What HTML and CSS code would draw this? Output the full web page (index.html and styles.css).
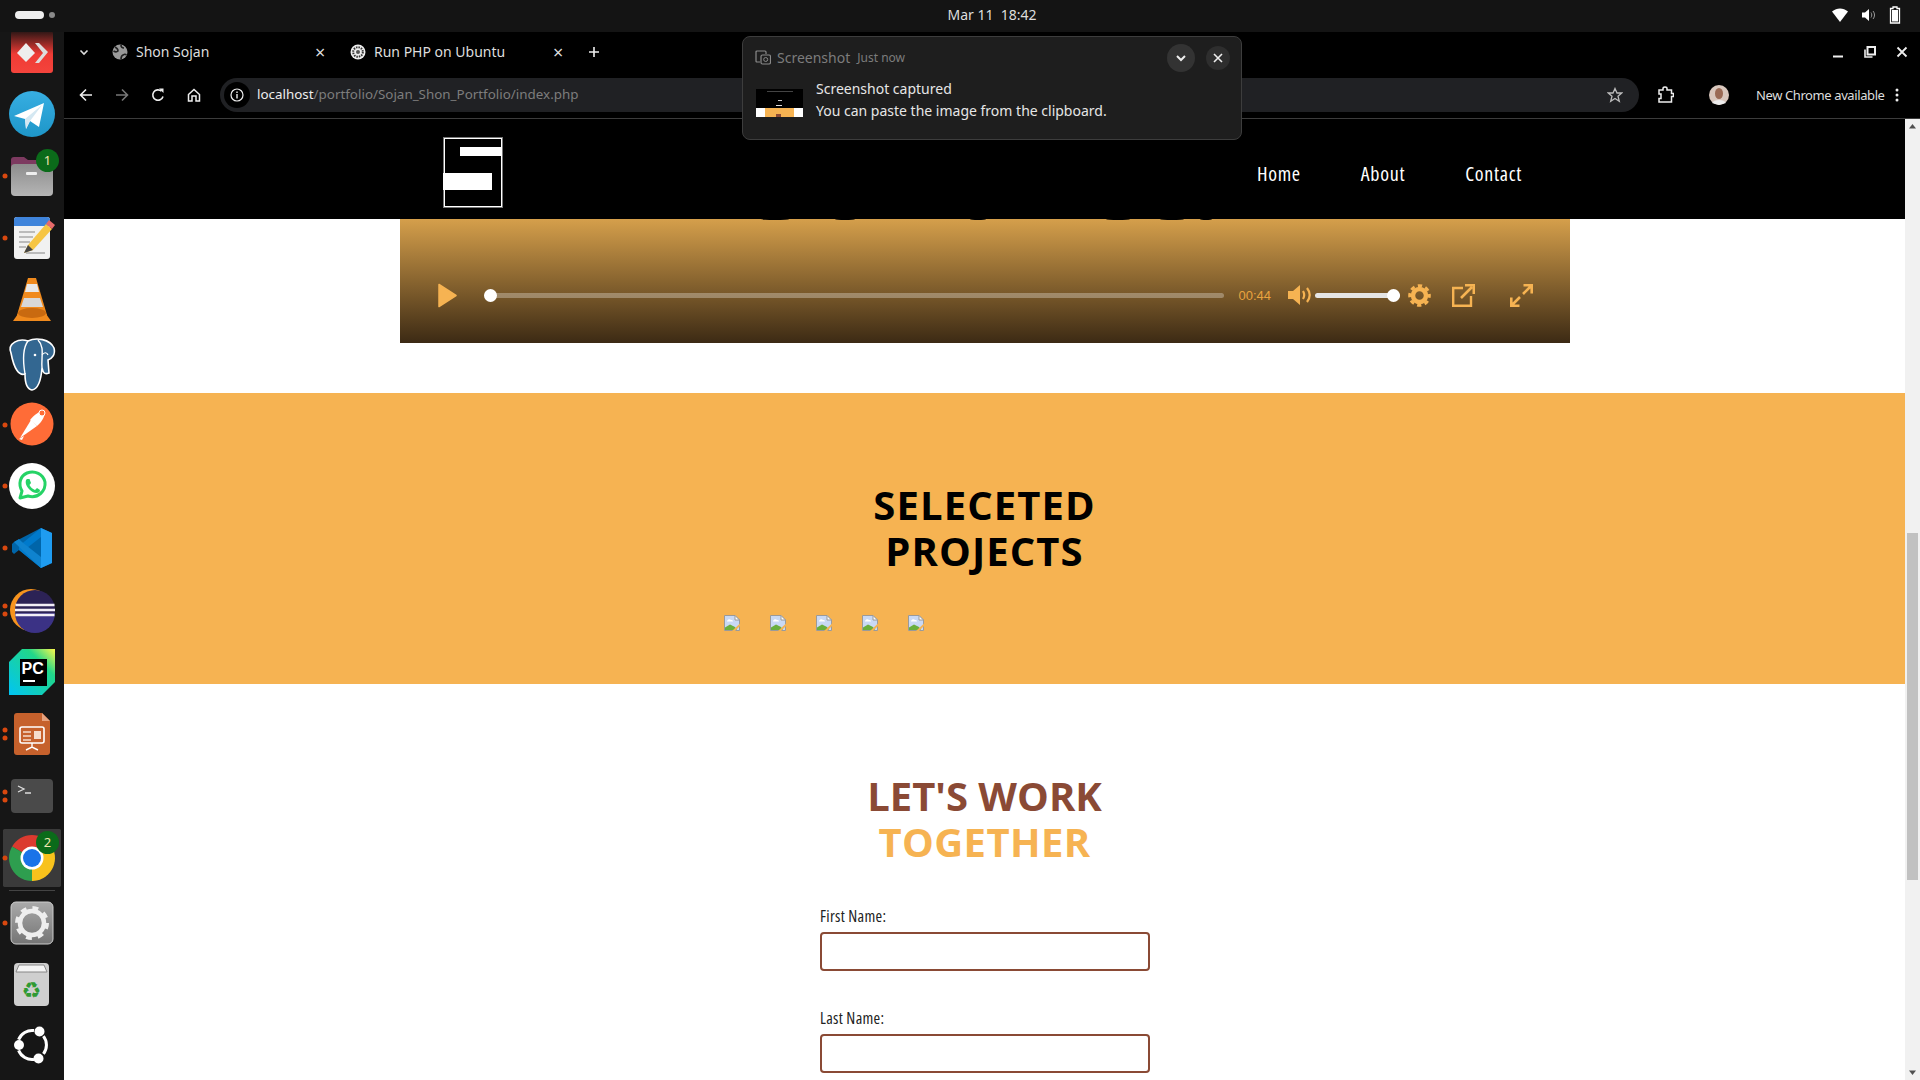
FILE: index.html
```html
<!DOCTYPE html>
<html lang="en">
<head>
    <meta charset="UTF-8">
    <title>Shon Sojan</title>
    <link rel="stylesheet" href="styles.css">
</head>
<body>
    <svg class="defs" width="0" height="0">
        <defs>
            <symbol id="broken" viewBox="0 0 16 16">
                <path d="M.5.5H11L15.5 5V15.5H.5Z" fill="#c9d9f5" stroke="#9a9a9a"/>
                <path d="M11 .5V5H15.5Z" fill="#fff" stroke="#9a9a9a"/>
                <path d="M3 6c1-2 3-2 4-1 1 0 2 0 2 1.500H3Z" fill="#fff"/>
                <path d="M1 15V12.500L6 9.500 11 12 13 15Z" fill="#6aaf3d"/>
                <path d="M8 16L16 8.500V11L11 16Z" fill="#f6b352"/>
            </symbol>
        </defs>
    </svg>

    <div class="topbar">
        <div class="activities"><span class="pill"></span><span class="pill-dot"></span></div>
        <div class="clock">Mar 11&nbsp;&nbsp;18:42</div>
        <div class="status">
            <svg width="18" height="16" viewBox="0 0 18 16"><path d="M1 4.500C6 .5 12 .5 17 4.500L9 15Z" fill="#fff"/></svg>
            <svg width="16" height="16" viewBox="0 0 16 16"><path d="M1 5.500H4L8 2V14L4 10.500H1Z" fill="#fff"/><path d="M10 5.500C11 7 11 9 10 10.500M12 4C14 6.500 14 9.500 12 12" fill="none" stroke="#999" stroke-width="1"/></svg>
            <svg width="12" height="18" viewBox="0 0 12 18"><path d="M4 1H8V2.500H10.500V17H1.500V2.500H4Z" fill="none" stroke="#fff" stroke-width="1.300"/><rect x="3" y="4" width="6" height="11.500" fill="#fff"/></svg>
        </div>
    </div>

    <div class="desk">
        <nav class="dock">
            <div class="dock-item">
                <svg viewBox="0 0 64 62"><defs><linearGradient id="ad" x1="0" y1="0" x2="0" y2="1"><stop offset="0" stop-color="#2a1615"/><stop offset=".55" stop-color="#ef3b35"/><stop offset="1" stop-color="#f4443c"/></linearGradient></defs><rect x="11" y="10" width="42" height="42" rx="3" fill="url(#ad)"/><path d="M26 22L35 32 26 41 17 32Z" fill="#eee"/><path d="M35 22H39L48 31 39 42H35L43 32Z" fill="#ddd"/></svg>
            </div>
            <div class="dock-item">
                <svg viewBox="0 0 64 62"><defs><linearGradient id="tg" x1="0" y1="0" x2="0" y2="1"><stop offset="0" stop-color="#37aee2"/><stop offset="1" stop-color="#1e96c8"/></linearGradient></defs><circle cx="32" cy="31" r="23" fill="url(#tg)"/><path d="M44 20L39 44 30 38 26 46 25 36 14 33Z" fill="#fff"/><path d="M25 36L42 22 30 38 26 46Z" fill="#d4e8f2"/></svg>
            </div>
            <div class="dock-item">
                <svg viewBox="0 0 64 62"><circle class="run" cx="5" cy="31" r="2.500"/><defs><linearGradient id="fl" x1="0" y1="0" x2="0" y2="1"><stop offset="0" stop-color="#8d8d8d"/><stop offset="1" stop-color="#b5b5b5"/></linearGradient></defs><path d="M11 23V15Q11 12 14 12H24L28 15H50Q53 15 53 18V23Z" fill="#7d3a60"/><rect x="11" y="19" width="42" height="32" rx="4" fill="url(#fl)"/><rect x="26" y="27" width="11" height="3" rx="1" fill="#eee"/></svg>
                <span class="badge">1</span>
            </div>
            <div class="dock-item">
                <svg viewBox="0 0 64 62"><circle class="run" cx="5" cy="31" r="2.500"/><rect x="14" y="10" width="36" height="42" rx="3" fill="#f1f1f1"/><path d="M14 19V13Q14 10 17 10H47Q50 10 50 13V19Z" fill="#3f84db"/><path d="M19 25H35M19 30H33M19 35H30M19 40H26M26 46H45" stroke="#bbb" stroke-width="2"/><path d="M24 46L28 38 46 17 52 22 33 43Z" fill="#f6c544"/><path d="M46 17L49 13 55 18 52 22Z" fill="#e76a6a"/><path d="M24 46L28 38 33 43Z" fill="#444"/></svg>
            </div>
            <div class="dock-item">
                <svg viewBox="0 0 64 62"><path d="M28 9H36L47 46H17Z" fill="#f08a1d"/><path d="M27 15H37L39 23H25Z" fill="#e8e8e8"/><path d="M24 29H40L43 38H21Z" fill="#d8d8d8"/><path d="M13 52L20 42H44L51 52Z" fill="#f08a1d"/><ellipse cx="32" cy="44" rx="14" ry="5" fill="#c96a10"/></svg>
            </div>
            <div class="dock-item">
                <svg viewBox="0 0 64 62"><path d="M11 22C7 12 19 7 28 10 36 6 50 8 54 17 56 24 51 28 48 29L49 42C44 44 43 41 42 37 41 50 38 58 32 59 26 58 25 50 25 43 19 45 14 38 11 22Z" fill="#336791" stroke="#fff" stroke-width="1.600"/><path d="M28 10C22 18 23 31 25 43M42 37C41 26 45 16 38 9" fill="none" stroke="#fff" stroke-width="1.400"/><path d="M42 24C44 21 47 21 48 24" fill="none" stroke="#fff" stroke-width="1.200"/><circle cx="35" cy="24" r="1.300" fill="#fff"/></svg>
            </div>
            <div class="dock-item">
                <svg viewBox="0 0 64 62"><circle class="run" cx="5" cy="32" r="2.500"/><circle cx="32" cy="31" r="21.500" fill="#ff6c37"/><path d="M20 45L31 27 37 33Z" fill="#fff"/><path d="M30 27C34 22 39 18 44 18 46 21 43 28 37 33Z" fill="#fff"/><path d="M19 46L24 43 22 47Z" fill="#fff"/><circle cx="42" cy="20" r="3" fill="#ff6c37" stroke="#fff"/></svg>
            </div>
            <div class="dock-item">
                <svg viewBox="0 0 64 62"><circle class="run" cx="5" cy="31" r="2.500"/><circle cx="32" cy="31" r="23" fill="#fff"/><path d="M20 43L22 36C18 29 20 21 27 18 35 15 43 19 45 27 46 36 38 44 28 41Z" fill="none" stroke="#25d366" stroke-width="3" stroke-linejoin="round"/><path d="M27 24L29.500 24 31 28 29.500 30C30.500 32 32.500 34 35 35L37 33 40 35 39.500 37C37 39 33 38 30 35 26.500 32 25 28 26 25Z" fill="#25d366"/></svg>
            </div>
            <div class="dock-item">
                <svg viewBox="0 0 64 62"><circle class="run" cx="5" cy="31" r="2.500"/><path d="M41 11L52 16V46L41 51 19 33 14 37 12 35V27L14 25Z" fill="#0065a9"/><path d="M41 11L52 16V46L41 51 41 40V20Z" fill="#1f9cf0"/><path d="M41 20L27 31 41 42V51L19 33 19 29 41 11Z" fill="#007acc"/><path d="M12 27L14 25 41 51 41 40 22 25 19 22 14 25Z" fill="#0f83cf"/></svg>
            </div>
            <div class="dock-item">
                <svg viewBox="0 0 64 62"><circle class="run" cx="5" cy="27" r="2.500"/><circle class="run" cx="5" cy="35" r="2.500"/><circle cx="31" cy="31" r="21" fill="#f7941e"/><circle cx="35" cy="31" r="20" fill="#2c2255"/><path d="M15 34A20 20 0 0 0 55 34Z" fill="#3b3285"/><path d="M15.500 26H54.500M15 31H55M15.500 36H54.500" stroke="#f2eef5" stroke-width="2.400"/></svg>
            </div>
            <div class="dock-item">
                <svg viewBox="0 0 64 62"><defs><linearGradient id="pc" x1="0" y1="1" x2="1" y2="0"><stop offset="0" stop-color="#00c4f4"/><stop offset=".7" stop-color="#21d789"/><stop offset="1" stop-color="#fcf84a"/></linearGradient></defs><path d="M22 8H55V41L42 54H9V21Z" fill="url(#pc)"/><rect x="20" y="18" width="27" height="27" fill="#000"/><text class="pc-text" x="21.500" y="33">PC</text><rect x="23" y="39" width="12" height="2" fill="#fff"/></svg>
            </div>
            <div class="dock-item">
                <svg viewBox="0 0 64 62"><circle class="run" cx="5" cy="27" r="2.500"/><circle class="run" cx="5" cy="35" r="2.500"/><path d="M17 10H42L50 18V49Q50 52 47 52H17Q14 52 14 49V13Q14 10 17 10Z" fill="#c6612c"/><path d="M42 10L50 18H42Z" fill="#e6a27e"/><rect x="20" y="24" width="24" height="16" rx="2" fill="none" stroke="#fff" stroke-width="1.600"/><path d="M23 29H31M23 33H31M23 37H31" stroke="#f5dccb" stroke-width="1.500"/><rect x="34" y="28" width="7" height="8" fill="#f5dccb"/><path d="M32 40V44M26 47L32 44 38 47" fill="none" stroke="#fff" stroke-width="1.400"/></svg>
            </div>
            <div class="dock-item">
                <svg viewBox="0 0 64 62"><circle class="run" cx="5" cy="27" r="2.500"/><circle class="run" cx="5" cy="35" r="2.500"/><rect x="11" y="14" width="42" height="34" rx="4" fill="#4a4a4a"/><path d="M18 21L24 24 18 27" fill="none" stroke="#ddd" stroke-width="1.300"/><path d="M25 28H31" stroke="#ddd" stroke-width="1.500"/></svg>
            </div>
            <div class="dock-item dock-active">
                <svg viewBox="0 0 64 62"><circle class="run" cx="5" cy="31" r="2.500"/><path d="M32 31L12.100 19.500A23 23 0 0 1 51.900 19.500Z" fill="#db3a2f"/><path d="M32 31L51.900 19.500A23 23 0 0 1 32 54Z" fill="#f8c21c"/><path d="M32 31L32 54A23 23 0 0 1 12.100 19.500Z" fill="#2e9e4f"/><circle cx="32" cy="31" r="11.500" fill="#fff"/><circle cx="32" cy="31" r="9" fill="#1a73e8"/></svg>
                <span class="badge">2</span>
            </div>
            <div class="dock-sep"></div>
            <div class="dock-item">
                <svg viewBox="0 0 64 62"><circle class="run" cx="5" cy="31" r="2.500"/><defs><linearGradient id="st" x1="0" y1="0" x2="0" y2="1"><stop offset="0" stop-color="#a9a9a9"/><stop offset="1" stop-color="#757575"/></linearGradient></defs><rect x="11" y="10" width="42" height="42" rx="5" fill="url(#st)" stroke="#ccc"/><circle cx="32" cy="31" r="12" fill="none" stroke="#eee" stroke-width="4.500"/><circle cx="32" cy="31" r="15" fill="none" stroke="#eee" stroke-width="4" stroke-dasharray="5.800 5.980"/></svg>
            </div>
            <div class="dock-item">
                <svg viewBox="0 0 64 62"><rect x="14" y="9" width="35" height="43" rx="4" fill="#cfcfcf"/><path d="M19 11H44L47 18H16Z" fill="#f4f4f4" stroke="#888"/><text class="recycle" x="31.500" y="44">♻</text></svg>
            </div>
            <div class="dock-item">
                <svg viewBox="0 0 64 62"><path d="M43.400 20.100A14.500 14.500 0 0 1 43.400 37.900M34 43.400A14.500 14.500 0 0 1 18.600 34.400M18.600 23.600A14.500 14.500 0 0 1 34 14.600" fill="none" stroke="#fff" stroke-width="3"/><circle cx="39.500" cy="15.500" r="5" fill="#fff"/><circle cx="19" cy="29" r="5" fill="#fff"/><circle cx="38.500" cy="42.500" r="5" fill="#fff"/></svg>
            </div>
        </nav>

        <div class="window">
            <div class="tabstrip">
                <svg class="tab-menu" width="12" height="12" viewBox="0 0 12 12"><path d="M2.500 4.500L6 8 9.500 4.500" fill="none" stroke="#ddd" stroke-width="1.600"/></svg>
                <div class="tab">
                    <svg width="16" height="16" viewBox="0 0 16 16"><circle cx="8" cy="8" r="7.500" fill="#999"/><path d="M3 3C5 4 6 5 6 7 5 8 3 8 1.500 7M9 15C9 12 10 11 12 10.500 13 10 14 10.500 14.500 11M9 1C9 3 10 4 12 4" fill="none" stroke="#222" stroke-width="1.600"/></svg>
                    <span class="tab-title">Shon Sojan</span>
                    <span class="tab-close">×</span>
                </div>
                <div class="tab">
                    <svg width="16" height="16" viewBox="0 0 16 16"><circle cx="8" cy="8" r="7.500" fill="#eee"/><circle cx="8" cy="8" r="4.800" fill="none" stroke="#333" stroke-width="2" stroke-dasharray="1.500 1"/><circle cx="8" cy="8" r="2" fill="#555"/></svg>
                    <span class="tab-title">Run PHP on Ubuntu</span>
                    <span class="tab-close">×</span>
                </div>
                <svg width="12" height="12" viewBox="0 0 12 12"><path d="M6 1V11M1 6H11" stroke="#eee" stroke-width="1.600"/></svg>
                <div class="win-controls">
                    <svg width="12" height="12" viewBox="0 0 12 12"><path d="M1 10.500H11" stroke="#eee" stroke-width="2"/></svg>
                    <svg width="12" height="12" viewBox="0 0 12 12"><path d="M3.500 1H11V8.500H3.500Z" fill="none" stroke="#eee" stroke-width="2"/><path d="M1 3.500V11H8.500" fill="none" stroke="#eee" stroke-width="1.600"/></svg>
                    <svg width="12" height="12" viewBox="0 0 12 12"><path d="M1.500 1.500L10.500 10.500M10.500 1.500L1.500 10.500" stroke="#eee" stroke-width="1.800"/></svg>
                </div>
            </div>
            <div class="toolbar">
                <svg width="14" height="14" viewBox="0 0 14 14"><path d="M13 7H2M7 1.500L1.500 7 7 12.500" fill="none" stroke="#eee" stroke-width="1.600"/></svg>
                <svg width="14" height="14" viewBox="0 0 14 14"><path d="M1 7H12M7 1.500L12.500 7 7 12.500" fill="none" stroke="#777" stroke-width="1.600"/></svg>
                <svg width="14" height="14" viewBox="0 0 14 14"><path d="M12 8.500A5.200 5.200 0 1 1 10.500 3.200" fill="none" stroke="#eee" stroke-width="1.600"/><path d="M8 .5H12.500V5Z" fill="#eee"/></svg>
                <svg width="14" height="14" viewBox="0 0 14 14"><path d="M1.500 6.500L7 1.500 12.500 6.500V13H9V8H5V13H1.500Z" fill="none" stroke="#eee" stroke-width="1.500"/></svg>
                <div class="omnibox">
                    <span class="site-info"><svg width="14" height="14" viewBox="0 0 14 14"><circle cx="7" cy="7" r="6" fill="none" stroke="#eee" stroke-width="1.200"/><path d="M7 6V10.500M7 3.500V5" stroke="#eee" stroke-width="1.400"/></svg></span>
                    <span class="url"><b>localhost</b>/portfolio/Sojan_Shon_Portfolio/index.php</span>
                    <svg class="star" width="16" height="16" viewBox="0 0 16 16"><path d="M8 1.500L10 6H14.800L11 9.200 12.300 14.300 8 11.500 3.700 14.300 5 9.200 1.200 6H6Z" fill="none" stroke="#bbb" stroke-width="1.300"/></svg>
                </div>
                <svg class="ext" width="16" height="18" viewBox="0 0 16 18"><path d="M1 4H5V2.500Q5 1 7 1T9 2.500V4H13.500V7.500H15.500V10.500H13.500V16H1V12.500H3V8H1Z" fill="none" stroke="#eee" stroke-width="1.500"/></svg>
                <svg class="avatar" width="20" height="20" viewBox="0 0 20 20"><circle cx="10" cy="10" r="10" fill="#d9c7bd"/><ellipse cx="10" cy="8.500" rx="4" ry="5.500" fill="#9a6a55"/><path d="M3 18C5 14 15 14 17 18L10 20Z" fill="#eee"/></svg>
                <span class="update">New Chrome available</span>
                <svg width="4" height="14" viewBox="0 0 4 14"><circle cx="2" cy="2" r="1.500" fill="#eee"/><circle cx="2" cy="7" r="1.500" fill="#eee"/><circle cx="2" cy="12" r="1.500" fill="#eee"/></svg>
            </div>

            <div class="viewport">
                <main class="page">
                    <header class="site-nav">
                        <div class="logo"><span class="logo-top"></span><span class="logo-mid"></span></div>
                        <div class="nav-links">
                            <a href="#">Home</a>
                            <a href="#">About</a>
                            <a href="#">Contact</a>
                        </div>
                    </header>

                    <section class="video">
                        <svg class="video-marks" width="1170" height="3" viewBox="0 0 1170 3"><ellipse cx="375" cy="0" rx="14" ry="1"/><ellipse cx="445" cy="0" rx="10" ry="1"/><ellipse cx="578" cy="0" rx="8" ry="1"/><ellipse cx="718" cy="0" rx="12" ry="1"/><ellipse cx="772" cy="0" rx="12" ry="1"/><ellipse cx="806" cy="0" rx="6" ry="1"/></svg>
                        <svg class="play" width="19" height="25" viewBox="0 0 19 25"><path d="M1 1.500L18 12.500 1 23.500Z" fill="#f6b352" stroke="#f6b352" stroke-width="1.500" stroke-linejoin="round"/></svg>
                        <div class="progress"><span class="thumb"></span></div>
                        <span class="time">00:44</span>
                        <svg class="vol-icon" width="25" height="20" viewBox="0 0 25 20"><path d="M0 6H5L12 0V20L5 14H0Z" fill="#f6b352"/><path d="M15 6C16.500 8.500 16.500 11.500 15 14M19 3C22.500 7.500 22.500 12.500 19 17" fill="none" stroke="#f6b352" stroke-width="2.200"/></svg>
                        <div class="volume"><span class="thumb"></span></div>
                        <svg class="gear" width="23" height="23" viewBox="0 0 23 23"><circle cx="11.500" cy="11.500" r="6.500" fill="none" stroke="#f6b352" stroke-width="4.500"/><circle cx="11.500" cy="11.500" r="9.800" fill="none" stroke="#f6b352" stroke-width="3" stroke-dasharray="4.300 3.400" stroke-dashoffset="2"/></svg>
                        <svg class="popout" width="23" height="23" viewBox="0 0 23 23"><path d="M11 4H1.200V21.800H19V12" fill="none" stroke="#f6b352" stroke-width="2.400"/><path d="M9 14L20 3M13 1.200H21.800V10" fill="none" stroke="#f6b352" stroke-width="2.600"/></svg>
                        <svg class="fullscreen" width="23" height="23" viewBox="0 0 23 23"><path d="M13 10L21 2M13.500 1.300H21.700V9.500M10 13L2 21M1.300 13.500V21.700H9.500" fill="none" stroke="#f6b352" stroke-width="2.600"/></svg>
                    </section>

                    <section class="projects">
                        <h2>SELECETED<br>PROJECTS</h2>
                        <div class="project-row">
                            <svg width="16" height="16"><use href="#broken"/></svg>
                            <svg width="16" height="16"><use href="#broken"/></svg>
                            <svg width="16" height="16"><use href="#broken"/></svg>
                            <svg width="16" height="16"><use href="#broken"/></svg>
                            <svg width="16" height="16"><use href="#broken"/></svg>
                        </div>
                    </section>

                    <section class="contact">
                        <h2>LET'S WORK<br><span>TOGETHER</span></h2>
                        <form class="contact-form">
                            <label for="first">First Name:</label>
                            <input type="text" id="first">
                            <label for="last">Last Name:</label>
                            <input type="text" id="last">
                        </form>
                    </section>
                </main>
                <div class="scrollbar">
                    <svg class="arrow-up" width="15" height="15" viewBox="0 0 15 15"><path d="M7.500 5L11 9.500H4Z" fill="#505050"/></svg>
                    <div class="scroll-thumb"></div>
                    <svg class="arrow-down" width="15" height="15" viewBox="0 0 15 15"><path d="M7.500 10L4 5.500H11Z" fill="#505050"/></svg>
                </div>
            </div>
        </div>
    </div>

    <div class="notification">
        <div class="notif-head">
            <svg width="16" height="15" viewBox="0 0 16 15"><path d="M5 12H2Q1 12 1 11V2Q1 1 2 1H10Q11 1 11 2V4" fill="none" stroke="#8a8a8a" stroke-width="1.200"/><rect x="6" y="5" width="9.500" height="9" rx="1.500" fill="none" stroke="#8a8a8a" stroke-width="1.200"/><circle cx="10.700" cy="9.500" r="2" fill="none" stroke="#8a8a8a"/></svg>
            <span class="notif-app">Screenshot</span>
            <span class="notif-time">Just now</span>
            <span class="notif-btn notif-expand"><svg width="12" height="12" viewBox="0 0 12 12"><path d="M2 4L6 8 10 4" fill="none" stroke="#eee" stroke-width="2"/></svg></span>
            <span class="notif-btn notif-close"><svg width="10" height="10" viewBox="0 0 10 10"><path d="M1 1L9 9M9 1L1 9" stroke="#eee" stroke-width="1.600"/></svg></span>
        </div>
        <div class="notif-body">
            <svg class="notif-thumb" width="47" height="28" viewBox="0 0 47 28"><rect width="47" height="28" fill="#000"/><rect y="19" width="47" height="9" fill="#fff"/><rect x="9" y="19" width="29" height="9" fill="#f6b352"/><rect x="20" y="25" width="5" height="3" fill="#8a4a35"/><rect x="11" y="2" width="26" height="1" fill="#444"/><rect x="22" y="11" width="4" height="1" fill="#ccc"/><rect x="20" y="16" width="6" height="1" fill="#ddd"/></svg>
            <div class="notif-text">
                <div>Screenshot captured</div>
                <div>You can paste the image from the clipboard.</div>
            </div>
        </div>
    </div>
</body>
</html>
```

FILE: styles.css
```css
* {
    box-sizing: border-box;
}
html, body {
    margin: 0;
    width: 1920px;
    height: 1080px;
    overflow: hidden;
}
body {
    position: relative;
    background-color: #141414;
    font-family: "Noto Sans", sans-serif;
    color: #eee;
}
.defs {
    position: absolute;
}

/* gnome top bar */
.topbar {
    height: 32px;
    display: flex;
    align-items: center;
    justify-content: space-between;
    padding: 0 19px 2px 15px;
    background-color: #141414;
}
.activities {
    width: 120px;
    display: flex;
    align-items: center;
    gap: 5px;
}
.pill {
    width: 29px;
    height: 8px;
    border-radius: 4px;
    background-color: #eee;
}
.pill-dot {
    width: 6px;
    height: 6px;
    border-radius: 50%;
    background-color: #8a8a8a;
}
.clock {
    font-size: 14px;
    color: #ddd;
    margin-left: 68px;
    margin-bottom: 1px;
}
.status {
    width: 120px;
    display: flex;
    justify-content: flex-end;
    align-items: center;
    gap: 12px;
}

/* dock */
.desk {
    display: flex;
    height: 1048px;
}
.dock {
    width: 64px;
    flex: none;
    overflow: hidden;
    background-color: #161616;
}
.dock-item {
    position: relative;
    width: 64px;
    height: 62px;
}
.dock-item:first-child {
    margin-top: -11px;
}
.dock-item svg {
    display: block;
    width: 64px;
    height: 62px;
}
.dock-active {
    background: linear-gradient(#3a3a3a, #3a3a3a) no-repeat 3px 2px / 58px 58px;
    border-radius: 10px;
}
.run {
    fill: #d9480f;
}
.badge {
    position: absolute;
    left: 36px;
    top: 4px;
    width: 23px;
    height: 23px;
    border-radius: 50%;
    background-color: #0b6b1a;
    color: #f0e6b0;
    font-size: 13px;
    line-height: 23px;
    text-align: center;
}
.dock-sep {
    height: 1px;
    margin: 1px 9px 1px;
    background-color: #444;
}
.pc-text {
    font-family: "Liberation Sans", sans-serif;
    font-size: 16px;
    font-weight: 700;
    fill: #fff;
}
.recycle {
    font-family: "DejaVu Sans", sans-serif;
    font-size: 22px;
    fill: #2f9a33;
    text-anchor: middle;
}

/* browser chrome */
.window {
    width: 1856px;
    flex: none;
    display: flex;
    flex-direction: column;
    background-color: #000;
}
.tabstrip {
    height: 40px;
    display: flex;
    align-items: center;
    padding-left: 14px;
}
.tab-menu {
    margin-right: 22px;
}
.tab {
    width: 238px;
    display: flex;
    align-items: center;
    gap: 8px;
    font-size: 14px;
    color: #ddd;
}
.tab-title {
    flex: 1;
    padding-bottom: 2px;
}
.tab-close {
    font-size: 18px;
    line-height: 16px;
    width: 35px;
    color: #ddd;
}
.win-controls {
    margin-left: auto;
    margin-right: 12px;
    display: flex;
    gap: 20px;
}
.toolbar {
    height: 47px;
    display: flex;
    align-items: center;
    gap: 22px;
    padding: 0 0 1px 15px;
    border-bottom: 1px solid #3c3c3c;
}
.omnibox {
    width: 1419px;
    height: 34px;
    flex: none;
    margin-left: -3px;
    display: flex;
    align-items: center;
    border-radius: 17px;
    background-color: #202124;
    padding-right: 16px;
}
.site-info {
    width: 26px;
    height: 26px;
    margin-left: 4px;
    display: flex;
    align-items: center;
    justify-content: center;
    border-radius: 50%;
    background-color: #000;
}
.url {
    margin-left: 7px;
    padding-bottom: 1px;
    font-size: 13.4px;
    color: #7d7d7d;
}
.url b {
    font-weight: 400;
    color: #eee;
}
.star {
    margin-left: auto;
}
.ext {
    margin-left: -3px;
}
.avatar {
    margin-left: 13px;
}
.update {
    font-size: 13px;
    letter-spacing: -0.4px;
    color: #ddd;
    margin-left: 5px;
    margin-right: -12px;
    white-space: nowrap;
}

/* the page inside the browser */
.viewport {
    flex: 1;
    display: flex;
    min-height: 0;
}
.page {
    width: 1841px;
    flex: none;
    overflow: hidden;
    background-color: #fff;
    font-family: "Open Sans", sans-serif;
}
.site-nav {
    height: 100px;
    display: flex;
    align-items: center;
    justify-content: space-between;
    padding: 7px 383px 0 379px;
    background-color: #000;
}
.logo {
    width: 60px;
    height: 71px;
    position: relative;
    border: 2px solid #fff;
    outline: 1px solid #777;
    outline-offset: -1px;
}
.logo-top {
    position: absolute;
    left: 15px;
    top: 8px;
    width: 41px;
    height: 9px;
    background-color: #fff;
}
.logo-mid {
    position: absolute;
    left: -2px;
    top: 34px;
    width: 49px;
    height: 17px;
    background-color: #fff;
}
.nav-links {
    display: flex;
    gap: 60px;
    padding-top: 1px;
}
.nav-links a {
    color: #fff;
    text-decoration: none;
    font-size: 20px;
    font-weight: 500;
    font-stretch: 75%;
    letter-spacing: 0.7px;
}
.video {
    position: relative;
    width: 1170px;
    height: 124px;
    margin: 0 auto;
    padding: 0 0 35px 38px;
    display: flex;
    align-items: flex-end;
    background: linear-gradient(#d59f4b, #3c2a14);
}
.video-marks {
    position: absolute;
    left: 0;
    top: 0;
}
.progress {
    position: relative;
    width: 740px;
    height: 5px;
    margin-left: 27px;
    margin-bottom: 10px;
    border-radius: 3px;
    background-color: rgba(255, 255, 255, 0.3);
}
.thumb {
    position: absolute;
    top: -4px;
    left: 0;
    width: 13px;
    height: 13px;
    border-radius: 50%;
    background-color: #fff;
}
.time {
    margin-left: 15px;
    width: 32px;
    margin-bottom: 5px;
    font-family: "Liberation Sans", sans-serif;
    font-size: 13px;
    color: #e9a33f;
}
.vol-icon {
    margin-left: 17px;
    margin-bottom: 3px;
}
.volume {
    position: relative;
    width: 85px;
    height: 5px;
    margin-left: 2px;
    margin-bottom: 10px;
    border-radius: 3px;
    background-color: #e5e5e5;
}
.volume .thumb {
    left: 72px;
}
.gear {
    margin-left: 8px;
    margin-bottom: 1px;
}
.popout {
    margin-left: 21px;
    margin-bottom: 1px;
}
.fullscreen {
    margin-left: 35px;
    margin-bottom: 1px;
}
.projects {
    height: 291px;
    margin-top: 50px;
    padding-top: 89px;
    background-color: #f6b352;
}
.projects h2, .contact h2 {
    margin: 0;
    text-align: center;
    font-size: 40px;
    line-height: 46px;
    font-weight: 700;
}
.projects h2 {
    color: #000;
    letter-spacing: 1.1px;
}
.project-row {
    display: flex;
    gap: 30px;
    margin-top: 41px;
    padding-left: 660px;
}
.contact {
    padding-top: 89px;
}
.contact h2 {
    color: #8a4a35;
}
.contact h2 span {
    color: #f6b352;
    letter-spacing: 0.4px;
}
.contact-form {
    width: 330px;
    margin: 41px 0 0 756px;
}
.contact-form label {
    display: block;
    height: 26px;
    line-height: 20px;
    font-size: 16px;
    font-stretch: 75%;
    letter-spacing: 0.3px;
    color: #222;
}
.contact-form input {
    display: block;
    width: 100%;
    height: 39px;
    margin-bottom: 37px;
    border: 2px solid #8a4a35;
    border-radius: 4px;
    background-color: #fff;
}
.scrollbar {
    flex: 1;
    position: relative;
    background-color: #f1f1f1;
}
.arrow-up {
    position: absolute;
    top: 0;
    left: 0;
}
.arrow-down {
    position: absolute;
    bottom: 0;
    left: 0;
}
.scroll-thumb {
    position: absolute;
    top: 414px;
    left: 2px;
    width: 11px;
    height: 347px;
    background-color: #c1c1c1;
}

/* notification, sits over the browser */
.notification {
    position: absolute;
    left: 742px;
    top: 36px;
    width: 500px;
    height: 104px;
    padding: 0 11px 0 12px;
    border: 1px solid #3d3d3d;
    border-radius: 8px;
    background-color: #1e1e1e;
}
.notif-head {
    height: 41px;
    display: flex;
    align-items: center;
    gap: 6px;
}
.notif-app {
    font-size: 14px;
    color: #7c7c7c;
}
.notif-time {
    font-size: 12px;
    margin-left: 1px;
    color: #7c7c7c;
}
.notif-btn {
    display: flex;
    align-items: center;
    justify-content: center;
    border-radius: 50%;
    background-color: #333;
}
.notif-expand {
    width: 28px;
    height: 28px;
    margin-left: auto;
}
.notif-close {
    width: 24px;
    height: 24px;
    margin-left: 5px;
    background-color: #2e2e2e;
}
.notif-body {
    display: flex;
    align-items: flex-start;
    gap: 13px;
    padding-left: 1px;
}
.notif-thumb {
    margin-top: 11px;
}
.notif-text {
    font-size: 14px;
    line-height: 22px;
    color: #e6e6e6;
}
```
